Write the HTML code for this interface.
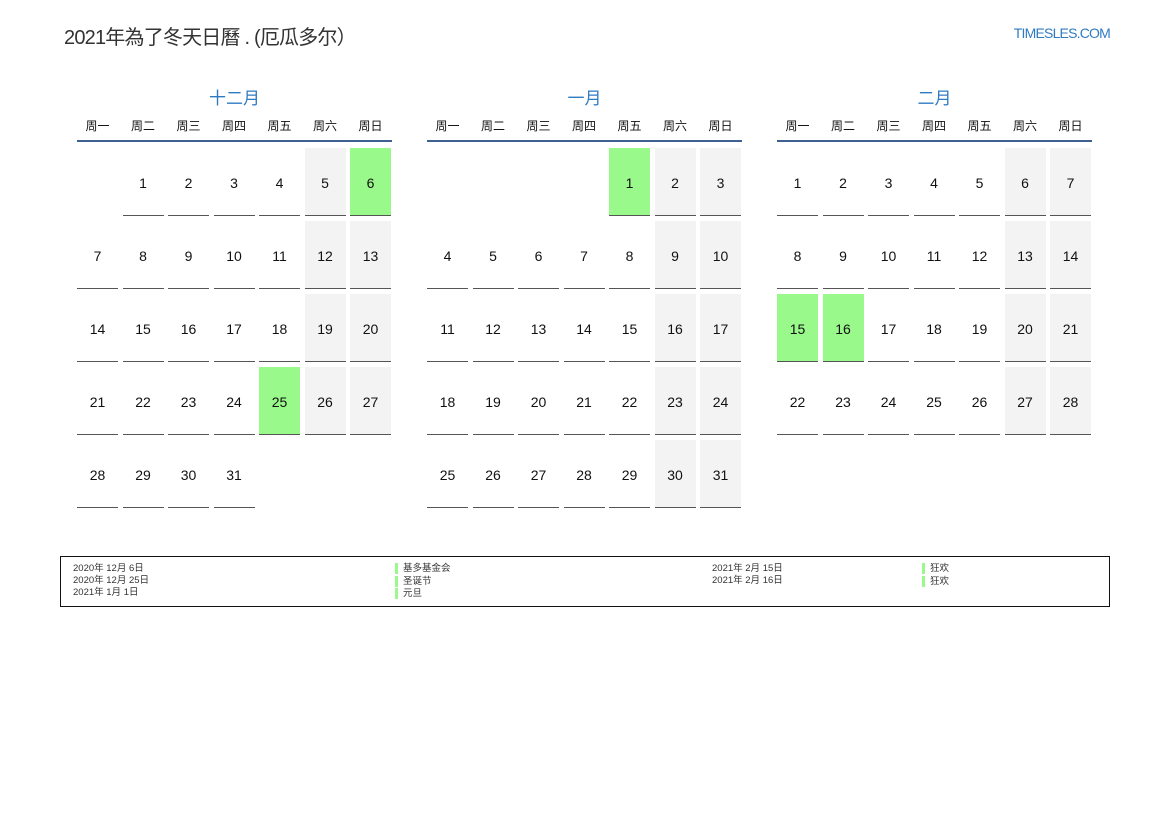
<!DOCTYPE html>
<html><head><meta charset="utf-8"><style>
*{margin:0;padding:0;box-sizing:border-box}
body{width:1169px;height:827px;background:#fff;font-family:"Liberation Sans","Noto Sans CJK SC",sans-serif;color:#222;position:relative;overflow:hidden}
.title{position:absolute;left:64px;top:21px;font-size:20px;color:#333;letter-spacing:-0.8px}
.site{position:absolute;right:59px;top:25px;font-size:14px;color:#2f7bc2;letter-spacing:-0.8px}
.month{position:absolute;top:84px;width:315px}
.mname{text-align:center;font-size:17px;color:#2f7bc2;height:26px}
.wd{display:grid;grid-template-columns:repeat(7,41px);column-gap:4.5px;font-size:12px;text-align:center;height:32px;line-height:32px;border-bottom:2px solid #3f6191;color:#111}
.grid{display:grid;grid-template-columns:repeat(7,41px);column-gap:4.5px;row-gap:5px;margin-top:6px}
.grid div{height:68px;line-height:70px;text-align:center;font-size:14px;color:#111;border-bottom:1.5px solid #555}
.grid div.e{border-bottom:none}
.grid div.w{background:#f3f3f3}
.grid div.h{background:#99f98a}
.legend{position:absolute;left:60px;top:556px;width:1050px;height:51px;border:1px solid #111;font-size:9.5px;color:#333}
.legend span{position:absolute;line-height:11px}
.bar{border-left:3px solid #99f98a;padding-left:5px}
</style></head><body>
<div class="title">2021年為了冬天日曆 . (厄瓜多尔）</div>
<div class="site">TIMESLES.COM</div>

<div class="month" style="left:77px">
<div class="mname">十二月</div>
<div class="wd"><span>周一</span><span>周二</span><span>周三</span><span>周四</span><span>周五</span><span>周六</span><span>周日</span></div>
<div class="grid">
<div class="e"></div><div>1</div><div>2</div><div>3</div><div>4</div><div class="w">5</div><div class="h">6</div>
<div>7</div><div>8</div><div>9</div><div>10</div><div>11</div><div class="w">12</div><div class="w">13</div>
<div>14</div><div>15</div><div>16</div><div>17</div><div>18</div><div class="w">19</div><div class="w">20</div>
<div>21</div><div>22</div><div>23</div><div>24</div><div class="h">25</div><div class="w">26</div><div class="w">27</div>
<div>28</div><div>29</div><div>30</div><div>31</div>
</div></div>

<div class="month" style="left:427px">
<div class="mname">一月</div>
<div class="wd"><span>周一</span><span>周二</span><span>周三</span><span>周四</span><span>周五</span><span>周六</span><span>周日</span></div>
<div class="grid">
<div class="e"></div><div class="e"></div><div class="e"></div><div class="e"></div><div class="h">1</div><div class="w">2</div><div class="w">3</div>
<div>4</div><div>5</div><div>6</div><div>7</div><div>8</div><div class="w">9</div><div class="w">10</div>
<div>11</div><div>12</div><div>13</div><div>14</div><div>15</div><div class="w">16</div><div class="w">17</div>
<div>18</div><div>19</div><div>20</div><div>21</div><div>22</div><div class="w">23</div><div class="w">24</div>
<div>25</div><div>26</div><div>27</div><div>28</div><div>29</div><div class="w">30</div><div class="w">31</div>
</div></div>

<div class="month" style="left:777px">
<div class="mname">二月</div>
<div class="wd"><span>周一</span><span>周二</span><span>周三</span><span>周四</span><span>周五</span><span>周六</span><span>周日</span></div>
<div class="grid">
<div>1</div><div>2</div><div>3</div><div>4</div><div>5</div><div class="w">6</div><div class="w">7</div>
<div>8</div><div>9</div><div>10</div><div>11</div><div>12</div><div class="w">13</div><div class="w">14</div>
<div class="h">15</div><div class="h">16</div><div>17</div><div>18</div><div>19</div><div class="w">20</div><div class="w">21</div>
<div>22</div><div>23</div><div>24</div><div>25</div><div>26</div><div class="w">27</div><div class="w">28</div>
</div></div>

<div class="legend">
<span style="left:12px;top:6px">2020年 12月 6日</span>
<span style="left:12px;top:18px">2020年 12月 25日</span>
<span style="left:12px;top:30px">2021年 1月 1日</span>
<span class="bar" style="left:334px;top:6px">基多基金会</span>
<span class="bar" style="left:334px;top:19px">圣诞节</span>
<span class="bar" style="left:334px;top:31px">元旦</span>
<span style="left:651px;top:6px">2021年 2月 15日</span>
<span style="left:651px;top:18px">2021年 2月 16日</span>
<span class="bar" style="left:861px;top:6px">狂欢</span>
<span class="bar" style="left:861px;top:19px">狂欢</span>
</div>
</body></html>
